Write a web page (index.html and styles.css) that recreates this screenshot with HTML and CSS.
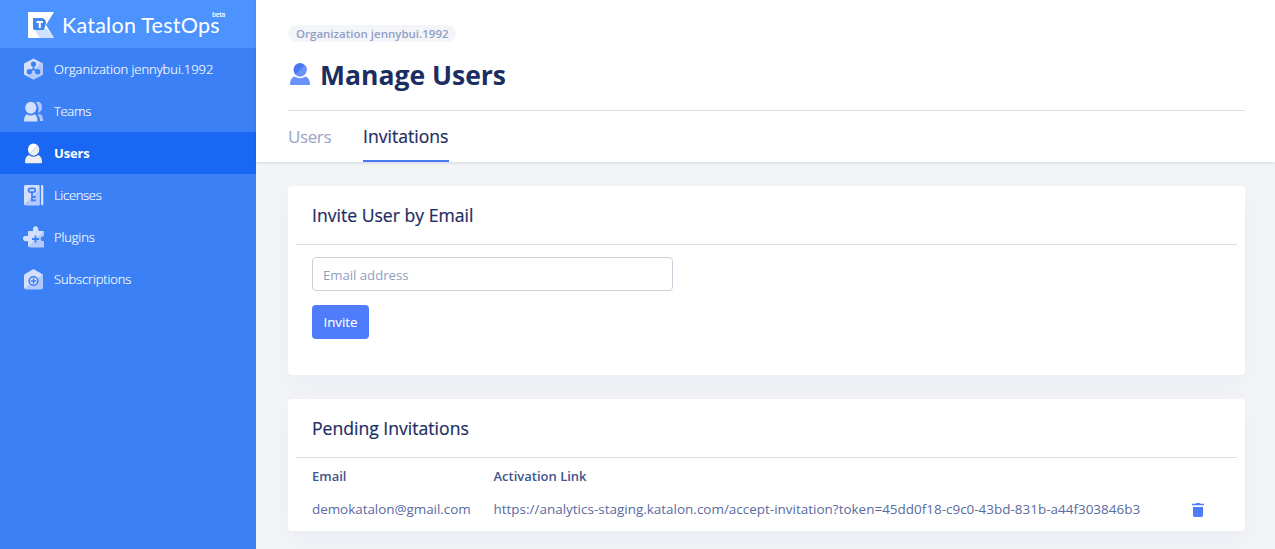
FILE: index.html
```html
<!DOCTYPE html>
<html lang="en">
<head>
<meta charset="utf-8">
<title>Manage Users</title>
<link rel="stylesheet" href="styles.css">
</head>
<body>
<div class="app">
  <aside class="sidebar">
    <div class="brand">
      <svg class="brand-mark" width="26" height="26" viewBox="0 0 26 26">
        <path d="M0 0H26L18 13L26 26H0Z" fill="#fff"/>
        <path d="M6 17H19L26 26H12Z" fill="#cfe0fc"/>
        <path d="M5 6H14Q18 7 18 11L16 18H7Q5 18 5 16Z" fill="#4185f1"/>
        <path d="M8.500 9H15V11H12.800V16H10.700V11H8.500Z" fill="#fff"/>
      </svg>
      <span class="brand-name">Katalon TestOps</span><span class="beta">beta</span>
    </div>
    <nav class="nav">
      <a class="nav-item org">
        <svg width="20" height="22" viewBox="0 0 20 22"><path d="M9.500 .5 19 5.500V16.500L9.500 21.500 0 16.500V5.500Z" fill="#d4dffc"/><path d="M17 4.500 19 5.500V16.500L9.500 21.500 3 18Z" fill="#b3c9fd"/><g fill="#3b80f5"><circle cx="9.500" cy="6" r="2.600"/><circle cx="5.300" cy="13.700" r="2.600"/><circle cx="13.700" cy="13.700" r="2.600"/></g><path d="M9.500 6V11L5.300 13.700M9.500 11L13.700 13.700" fill="none" stroke="#3b80f5" stroke-width="1.700"/></svg>
        <span>Organization jennybui.1992</span></a>
      <a class="nav-item teams">
        <svg width="20" height="22" viewBox="0 0 20 22"><path d="M12 2Q18 1 18 7.500Q18 11 14 13Q16 8 12 2ZM15 14Q19 14 19 21H16Q16 17 14 15Z" fill="#b3c9fd"/><ellipse cx="6.800" cy="7.700" rx="5.600" ry="6" fill="#d4dffc"/><path d="M0 21.500Q0 15.500 3 14.200Q6.800 17 10.500 14.200Q13.500 15.500 13.500 21.500Z" fill="#d4dffc"/></svg>
        <span>Teams</span></a>
      <a class="nav-item active">
        <svg width="20" height="22" viewBox="0 0 20 22"><ellipse cx="9.500" cy="7.500" rx="5.500" ry="6" fill="#fff"/><path d="M5.700 11.800 13.500 3.500Q17.500 8 12.500 12.500Q9 14.500 5.700 11.800Z" fill="#eee"/><path d="M5.700 12 13.700 3.500" stroke="#b8c9ea" stroke-width=".7"/><path d="M1 20Q1 15 4.500 13Q9.500 16.500 14.500 13Q18 15 18 20Q18 21.300 17 21.300H2Q1 21.300 1 20Z" fill="#eee"/></svg>
        <span>Users</span></a>
      <a class="nav-item licenses">
        <svg width="20" height="22" viewBox="0 0 20 22"><path d="M1.500 1H15.500V21.300H1.500Q0 21.300 0 19.800V2.500Q0 1 1.500 1Z" fill="#d4dffc"/><path d="M15.500 5V21.300H1.500L.3 20.500Z" fill="#b3c9fd"/><rect x="17" y="1" width="2.300" height="20.300" rx="1" fill="#d4dffc"/><g fill="none" stroke="#3b80f5" stroke-width="1.700"><rect x="4.500" y="4.300" width="6.800" height="3.800" rx="1.900"/><path d="M8 8V17.500M8 12.800H12M8 16.300H12"/></g></svg>
        <span>Licenses</span></a>
      <a class="nav-item plugins">
        <svg width="22" height="22" viewBox="0 0 22 22"><path d="M6 5H10Q9.500 .3 12.500 .3T15.500 5H19.500Q21 5 21 6.500V10Q17.500 10 17.500 12.800T21 15.500V21.300H7Q5 21.300 5 19.500V15Q0 16 0 12.500T5 10V6Q5 5 6 5Z" fill="#d4dffc"/><path d="M20.500 5.300Q21 6 21 6.500V10Q17.500 10 17.500 12.800T21 15.500V21.300H7L5.400 20.300Z" fill="#b3c9fd"/><path d="M9 13H16M12.500 9.500V16.500" stroke="#3b80f5" stroke-width="1.800"/></svg>
        <span>Plugins</span></a>
      <a class="nav-item subs">
        <svg width="20" height="22" viewBox="0 0 20 22"><path d="M9.500 1 18 6Q19 6.600 19 8V19.500Q19 21.300 17 21.300H2Q0 21.300 0 19.500V8Q0 6.600 1 6Z" fill="#d4dffc"/><path d="M18.500 6.500 19 8V19.500Q19 21.300 17 21.300H2L.6 20.700Z" fill="#b3c9fd"/><circle cx="9.500" cy="13" r="4.300" fill="#d4dffc" stroke="#3b80f5" stroke-width="1.600"/><path d="M6.800 13H12.200M9.500 10.300V15.700" stroke="#3b80f5" stroke-width="1.400"/></svg>
        <span>Subscriptions</span></a>
    </nav>
  </aside>
  <main class="main">
    <header class="header">
      <div class="badge">Organization jennybui.1992</div>
      <h1 class="title">
        <svg width="20" height="22" viewBox="0 0 20 22"><ellipse cx="10" cy="6.700" rx="6.500" ry="6.700" fill="#4a76f5"/><path d="M5.500 11.500 15 2Q19 7 14 12Q9 15 5.500 11.500Z" fill="#6b92fc"/><path d="M0 21Q0 15 4.500 13.500Q10 17 15.500 13.500Q20 15 20 22H1Q0 22 0 21Z" fill="#6b92fc"/></svg>
        <span>Manage Users</span></h1>
      <div class="tabs"><a class="tab tab-users">Users</a><a class="tab current">Invitations</a></div>
    </header>
    <div class="content">
      <section class="card invite">
        <h2 class="card-title">Invite User by Email</h2>
        <div class="form">
          <input class="email" type="text" placeholder="Email address">
          <button class="button">Invite</button>
        </div>
      </section>
      <section class="card pending">
        <h2 class="card-title">Pending Invitations</h2>
        <div class="table">
          <div class="row head"><span class="th-email">Email</span><span class="th-link">Activation Link</span></div>
          <div class="row"><span class="mail">demokatalon@gmail.com</span><span class="link">https://analytics-staging.katalon.com/accept-invitation?token=45dd0f18-c9c0-43bd-831b-a44f303846b3</span>
            <svg class="trash" width="12" height="14" viewBox="0 0 12 14"><path d="M0 .8H3.500L4.300 0H7.700L8.500.8H12V2.300H0ZM1 4H11V12.600Q11 14 9.600 14H2.400Q1 14 1 12.600Z" fill="#4e7cfb"/></svg></div>
        </div>
      </section>
    </div>
  </main>
</div>
</body>
</html>
```
FILE: styles.css
```css
* { box-sizing: border-box; }
body { margin: 0; font: 14px/20px "Open Sans", "Noto Sans", sans-serif; color: #5a6b9f; }
.app { display: flex; height: 549px; overflow: hidden; }
.sidebar { width: 256px; flex: none; background: #3b80f5; color: #fff; }
.brand { height: 48px; background: #4c93ff; display: flex; padding: 12px 0 0 28px; }
.brand-mark { flex: none; }
.brand-name { margin-left: 8px; width: 150px; font: 21.5px/26px Lato, sans-serif; white-space: nowrap; letter-spacing: 0.25px; }
.beta { font: 600 6.5px/8px "Open Sans", sans-serif; margin-top: -1px; letter-spacing: -0.3px; }
.nav-item { height: 42px; display: flex; align-items: center; padding-left: 24px; font-weight: 300; font-size: 13px; letter-spacing: -0.15px; white-space: nowrap; -webkit-text-stroke: 0.15px #fff; }
.nav-item svg { width: 20px; flex: none; overflow: visible; }
.plugins svg { width: 22px; margin: 0 -1px; }
.nav-item span { margin-left: 10px; }
.nav-item.org { letter-spacing: -0.05px; }
.nav-item.teams, .nav-item.licenses { letter-spacing: -0.3px; }
.active { background: #1967f2; font-weight: 700; -webkit-text-stroke: 0; }
.main { flex: 1; min-width: 0; background: #f2f4f8; }
.header { height: 162px; background: #fff; padding: 25px 30px 0 32px; box-shadow: 0 1px 3px rgba(30, 45, 80, .14); position: relative; }
.badge { width: 168px; height: 17px; border-radius: 9px; background: #f3f5f9; color: #929fc4; font-size: 11.500px; line-height: 17px; font-weight: 600; padding-left: 8px; white-space: nowrap; }
.title { margin: 0; height: 69px; border-bottom: 1px solid #dcdee7; display: flex; font-size: 26.500px; line-height: 66px; font-weight: 700; color: #1b2d61; padding-left: 2px; }
.title svg { margin-top: 21px; margin-right: 10px; }
.tabs { display: flex; gap: 32px; height: 51px; font-size: 17px; line-height: 51px; color: #97a4c5; }
.current { color: #1b2d61; font-size: 17.600px; -webkit-text-stroke: 0.2px; border-bottom: 2px solid #4977f4; width: 86px; }
.tab-users { width: 43px; letter-spacing: -0.4px; }
.content { padding: 24px 30px 0 32px; display: flex; flex-direction: column; gap: 24px; }
.card { background: #fff; border-radius: 4px; padding: 0 8px; box-shadow: 0 8px 30px rgba(30, 45, 80, .04); }
.invite { height: 189px; }
.pending { height: 132px; }
.card-title { margin: 0; padding-left: 16px; height: 59px; border-bottom: 1px solid #dcdee7; font-size: 17.600px; line-height: 58px; font-weight: 400; -webkit-text-stroke: 0.2px; color: #1b2d61; }
.form { padding: 12px 16px; display: flex; flex-direction: column; align-items: flex-start; gap: 14px; }
.email { width: 361px; height: 34px; border: 1px solid #cdd0da; border-radius: 4px; padding: 2px 10px 0; font: 13.150px "Open Sans", sans-serif; color: #55689d; }
.email::placeholder { color: #909dbf; opacity: 1; }
.button { width: 57px; height: 34px; border: 0; border-radius: 4px; background: #4e7cfb; color: #fff; font: 500 13.300px "Open Sans", sans-serif; padding: 0; -webkit-text-stroke: 0.1px; }
.table { padding: 0 16px; }
.row { display: flex; height: 33px; line-height: 36px; font-size: 13.480px; white-space: nowrap; position: relative; }
.row > span:first-child { width: 181.500px; flex: none; }
.head { font-size: 13px; font-weight: 600; color: #42548b; }
.mail { letter-spacing: -0.050px; }
.link { width: 698px; }
.trash { margin-top: 12px; }
```
